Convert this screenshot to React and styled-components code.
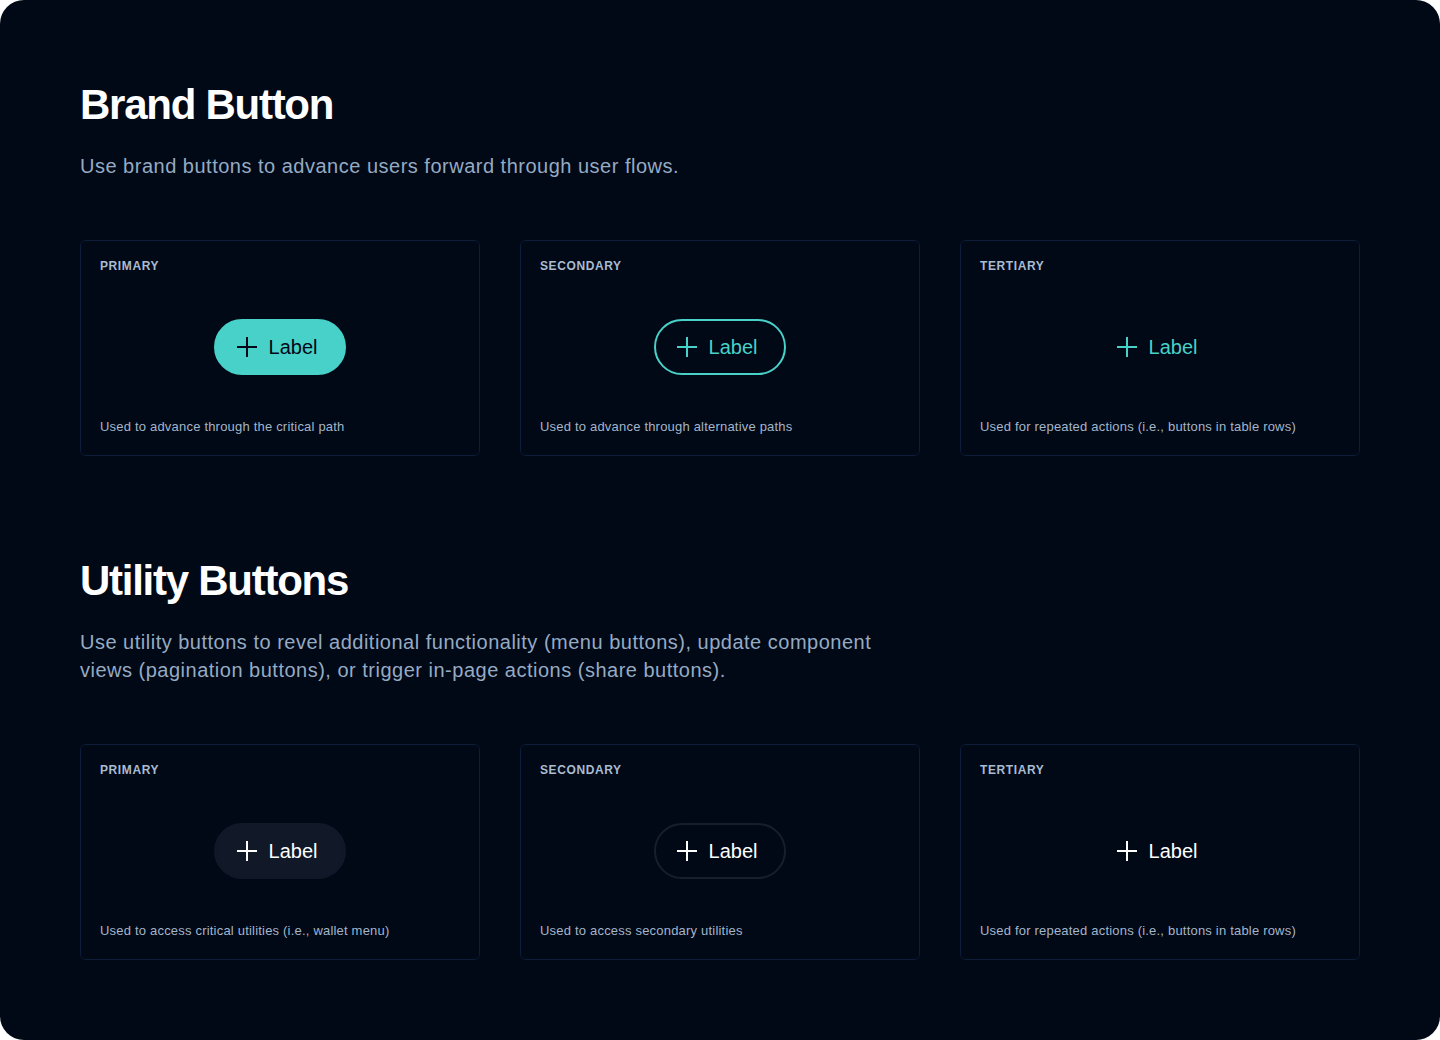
import styled, { createGlobalStyle, css } from 'styled-components'

const GlobalStyle = createGlobalStyle`
  html, body {
    margin: 0;
    padding: 0;
    background: #ffffff;
  }
  body {
    font-family: "Liberation Sans", Arial, sans-serif;
    -webkit-font-smoothing: antialiased;
  }
`

const Page = styled.main`
  box-sizing: border-box;
  min-height: 1040px;
  padding: 80px 80px 80px;
  border-radius: 24px;
  background: #010816;
`

const Section = styled.section`
  & + & {
    margin-top: 100px;
  }
`

const Title = styled.h2`
  margin: 0;
  color: #ffffff;
  font-size: 42px;
  line-height: 50px;
  font-weight: 700;
  letter-spacing: -0.03em;
`

const Lead = styled.p`
  max-width: 820px;
  margin: 22px 0 0;
  color: #95abc3;
  font-size: 20px;
  line-height: 28px;
  letter-spacing: 0.5px;
`

const CardRow = styled.div`
  display: grid;
  grid-template-columns: repeat(3, 400px);
  gap: 40px;
  margin-top: 60px;
`

const Card = styled.article`
  box-sizing: border-box;
  display: flex;
  flex-direction: column;
  height: 216px;
  padding: 17px 19px 19px;
  border: 1px solid #0d1d3a;
  border-radius: 6px;
  background: #010816;
`

const CardLabel = styled.h3`
  margin: 0;
  color: #a9bcd1;
  font-size: 12px;
  line-height: 16px;
  font-weight: 700;
  letter-spacing: 0.05em;
  text-transform: uppercase;
`

const Stage = styled.div`
  flex: 1;
  display: flex;
  align-items: center;
  justify-content: center;
  padding-top: 2px;
`

const CardText = styled.p`
  margin: 0;
  color: #a3b6ca;
  font-size: 13px;
  line-height: 18px;
  letter-spacing: 0.2px;
`

const variants = {
  brandPrimary: css`
    background: #48d1c8;
    border-color: #48d1c8;
    color: #020817;
  `,
  brandSecondary: css`
    background: transparent;
    border-color: #48d1c8;
    color: #48d1c8;
  `,
  brandTertiary: css`
    background: transparent;
    border-color: transparent;
    color: #48d1c8;
  `,
  utilityPrimary: css`
    background: #111827;
    border-color: #111827;
    color: #ffffff;
  `,
  utilitySecondary: css`
    background: transparent;
    border-color: #171f2e;
    color: #ffffff;
  `,
  utilityTertiary: css`
    background: transparent;
    border-color: transparent;
    color: #ffffff;
  `,
}

const Button = styled.button`
  box-sizing: border-box;
  display: inline-flex;
  align-items: center;
  gap: 10px;
  height: 56px;
  padding: 0 27px 0 19px;
  border: 2px solid transparent;
  border-radius: 28px;
  font-family: "Liberation Sans", Arial, sans-serif;
  font-size: 20px;
  line-height: 1;
  letter-spacing: 0;
  cursor: pointer;
  ${({ $variant }) => variants[$variant]}
`

const PlusIcon = () => (
  <svg width="24" height="24" viewBox="0 0 24 24" fill="none" aria-hidden="true">
    <path d="M12 2v20M2 12h20" stroke="currentColor" strokeWidth="2" />
  </svg>
)

const sections = [
  {
    title: 'Brand Button',
    lead: 'Use brand buttons to advance users forward through user flows.',
    cards: [
      { label: 'Primary', variant: 'brandPrimary', text: 'Used to advance through the critical path' },
      { label: 'Secondary', variant: 'brandSecondary', text: 'Used to advance through alternative paths' },
      { label: 'Tertiary', variant: 'brandTertiary', text: 'Used for repeated actions (i.e., buttons in table rows)' },
    ],
  },
  {
    title: 'Utility Buttons',
    lead: 'Use utility buttons to revel additional functionality (menu buttons), update component views (pagination buttons), or trigger in-page actions (share buttons).',
    cards: [
      { label: 'Primary', variant: 'utilityPrimary', text: 'Used to access critical utilities (i.e., wallet menu)' },
      { label: 'Secondary', variant: 'utilitySecondary', text: 'Used to access secondary utilities' },
      { label: 'Tertiary', variant: 'utilityTertiary', text: 'Used for repeated actions (i.e., buttons in table rows)' },
    ],
  },
]

const App = () => {
  return (
    <>
      <GlobalStyle />
      <Page>
        {sections.map((section) => (
          <Section key={section.title}>
            <Title>{section.title}</Title>
            <Lead>{section.lead}</Lead>
            <CardRow>
              {section.cards.map((card) => (
                <Card key={card.label}>
                  <CardLabel>{card.label}</CardLabel>
                  <Stage>
                    <Button $variant={card.variant}>
                      <PlusIcon />
                      Label
                    </Button>
                  </Stage>
                  <CardText>{card.text}</CardText>
                </Card>
              ))}
            </CardRow>
          </Section>
        ))}
      </Page>
    </>
  )
}

export default App
